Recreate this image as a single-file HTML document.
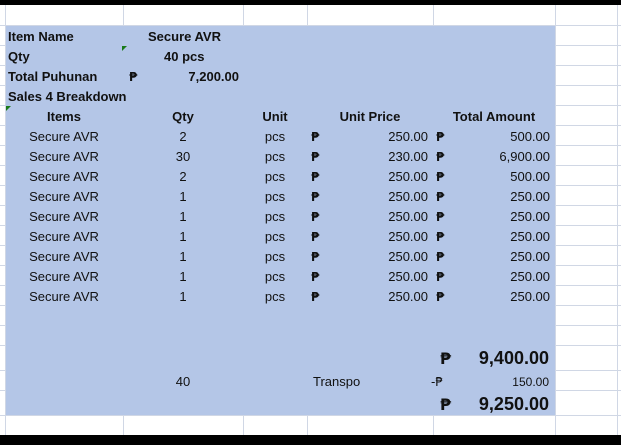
<!DOCTYPE html>
<html><head><meta charset="utf-8"><style>
*{margin:0;padding:0;box-sizing:border-box}
body{width:621px;height:445px;position:relative;background:#fff;overflow:hidden;font-family:"Liberation Sans","DejaVu Sans",sans-serif;font-size:13px;color:#111}
.a{position:absolute;white-space:nowrap}
.h{position:absolute;left:0;width:621px;height:1px;background:#d0d7e5}
.v{position:absolute;top:0;width:1px;height:445px;background:#d0d7e5}
.b{font-weight:bold}
.p{font-family:"DejaVu Sans",sans-serif;font-size:12px;font-weight:bold}
</style></head><body>
<div class="v" style="left:5px"></div>
<div class="v" style="left:123px"></div>
<div class="v" style="left:243px"></div>
<div class="v" style="left:307px"></div>
<div class="v" style="left:433px"></div>
<div class="v" style="left:555px"></div>
<div class="v" style="left:617px"></div>
<div class="h" style="top:25px"></div><div class="h" style="top:45px"></div><div class="h" style="top:65px"></div><div class="h" style="top:85px"></div><div class="h" style="top:105px"></div><div class="h" style="top:125px"></div><div class="h" style="top:145px"></div><div class="h" style="top:165px"></div><div class="h" style="top:185px"></div><div class="h" style="top:205px"></div><div class="h" style="top:225px"></div><div class="h" style="top:245px"></div><div class="h" style="top:265px"></div><div class="h" style="top:285px"></div><div class="h" style="top:305px"></div><div class="h" style="top:325px"></div><div class="h" style="top:345px"></div><div class="h" style="top:370px"></div><div class="h" style="top:390px"></div><div class="h" style="top:415px"></div>
<div class="a" style="left:6px;top:26px;width:549px;height:389px;background:#b4c6e7"></div>
<div class="a" style="left:0;top:0;width:621px;height:5px;background:#000"></div>
<div class="a" style="left:0;top:435px;width:621px;height:10px;background:#000"></div>
<div class="a" style="left:122px;top:46px;width:0;height:0;border-top:5px solid #1a7a1a;border-right:5px solid transparent"></div>
<div class="a" style="left:6px;top:106px;width:0;height:0;border-top:5px solid #1a7a1a;border-right:5px solid transparent"></div>

<div class="a b" style="left:8px;top:29px">Item Name</div>
<div class="a b" style="left:148px;top:29px">Secure AVR</div>
<div class="a b" style="left:8px;top:49px">Qty</div>
<div class="a b" style="left:164px;top:49px">40 pcs</div>
<div class="a b" style="left:8px;top:69px">Total Puhunan</div>
<div class="a p" style="left:129px;top:70px">₱</div>
<div class="a b" style="left:160px;top:69px;width:79px;text-align:right">7,200.00</div>
<div class="a b" style="left:8px;top:89px">Sales 4 Breakdown</div>

<div class="a b" style="left:5px;top:109px;width:118px;text-align:center">Items</div>
<div class="a b" style="left:123px;top:109px;width:120px;text-align:center">Qty</div>
<div class="a b" style="left:243px;top:109px;width:64px;text-align:center">Unit</div>
<div class="a b" style="left:307px;top:109px;width:126px;text-align:center">Unit Price</div>
<div class="a b" style="left:433px;top:109px;width:122px;text-align:center">Total Amount</div>

<div id="rows"></div>
<script>
var d=[["2","250.00","500.00"],["30","230.00","6,900.00"],["2","250.00","500.00"],["1","250.00","250.00"],["1","250.00","250.00"],["1","250.00","250.00"],["1","250.00","250.00"],["1","250.00","250.00"],["1","250.00","250.00"]];
var h="";
d.forEach(function(r,i){var t=129+i*20;
h+='<div class="a" style="left:5px;top:'+t+'px;width:118px;text-align:center">Secure AVR</div>';
h+='<div class="a" style="left:123px;top:'+t+'px;width:120px;text-align:center">'+r[0]+'</div>';
h+='<div class="a" style="left:243px;top:'+t+'px;width:64px;text-align:center">pcs</div>';
h+='<div class="a p" style="left:311px;top:'+(t+1)+'px">₱</div>';
h+='<div class="a" style="left:340px;top:'+t+'px;width:88px;text-align:right">'+r[1]+'</div>';
h+='<div class="a p" style="left:436px;top:'+(t+1)+'px">₱</div>';
h+='<div class="a" style="left:460px;top:'+t+'px;width:90px;text-align:right">'+r[2]+'</div>';});
document.getElementById("rows").innerHTML=h;
</script>

<div class="a p" style="left:440px;top:349px;font-size:16px">₱</div>
<div class="a b" style="left:440px;top:348px;width:109px;text-align:right;font-size:18px">9,400.00</div>
<div class="a" style="left:123px;top:374px;width:120px;text-align:center">40</div>
<div class="a" style="left:313px;top:374px">Transpo</div>
<div class="a p" style="left:431px;top:375px;font-weight:normal">-₱</div>
<div class="a" style="left:470px;top:375px;width:79px;text-align:right;font-size:12px">150.00</div>
<div class="a p" style="left:440px;top:395px;font-size:16px">₱</div>
<div class="a b" style="left:440px;top:394px;width:109px;text-align:right;font-size:18px">9,250.00</div>
</body></html>
